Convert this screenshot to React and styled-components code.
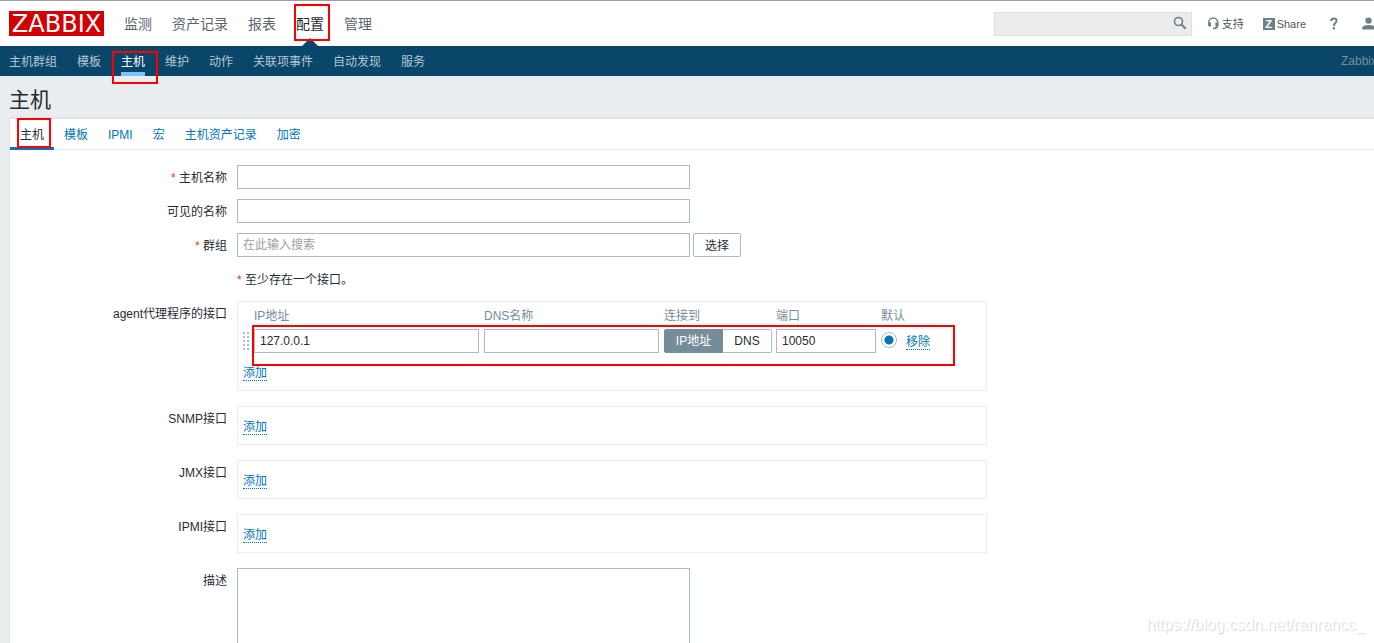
import React from "react";
import styled, { createGlobalStyle, css } from "styled-components";

const GlobalStyle = createGlobalStyle`
  *, *::before, *::after { box-sizing: border-box; }
  body {
    margin: 0;
    background: #e9edf0;
    color: #1f2c33;
    font: 12px/16px "Liberation Sans", "Noto Sans CJK SC", sans-serif;
  }
  input, textarea, button { font: inherit; color: inherit; }
`;

const Viewport = styled.div`
  height: 100vh;
  overflow: hidden;
`;

/* The page is slightly wider than the window, so its right edge is cut. */
const Page = styled.div`
  width: calc(100% + 10px);
`;

const Mark = styled.span`
  position: absolute;
  z-index: 5;
  top: ${(p) => p.$top}px;
  left: ${(p) => p.$left}px;
  width: ${(p) => p.$width}px;
  height: ${(p) => p.$height}px;
  border: 2px solid #f00;
  pointer-events: none;
`;

const Header = styled.header`
  display: flex;
  align-items: center;
  height: 46px;
  padding: 0 8px 0 9px;
  border-top: 1px solid #a0a0a0;
  background: #fff;
`;

const Logo = styled.a`
  width: 95px;
  height: 25px;
  margin-right: 20px;
  background: #d40000;
  color: #fff;
  font: 24px/27px "DejaVu Sans", sans-serif;
  text-align: center;
  text-decoration: none;
`;

const MainNav = styled.nav`
  display: flex;
  gap: 20px;
  height: 100%;
`;

const MainLink = styled.a`
  position: relative;
  color: ${(p) => (p.$active ? "#1f2c33" : "#5a656c")};
  font-size: 14px;
  line-height: 46px;
  text-decoration: none;
  ${(p) =>
    p.$active &&
    css`
      &::after {
        content: "";
        position: absolute;
        bottom: 0;
        left: 50%;
        margin-left: -8px;
        border: 8px solid transparent;
        border-top: 0;
        border-bottom-color: #0a466a;
      }
    `}
`;

const HeaderTools = styled.div`
  display: flex;
  align-items: center;
  margin-left: auto;
`;

const Search = styled.form`
  display: flex;
  align-items: center;
  width: 198px;
  height: 24px;
  margin-right: 15px;
  padding-right: 4px;
  border: 1px solid #e0e0e0;
  background: #ececec;
`;

const SearchInput = styled.input`
  flex: 1;
  min-width: 0;
  height: 22px;
  border: 0;
  background: transparent;
`;

const IconButton = styled.button`
  display: flex;
  padding: 0 0 2px;
  border: 0;
  background: none;
  color: #6c7f8a;
`;

const ToolLink = styled.a`
  display: flex;
  align-items: center;
  gap: 2px;
  margin-right: ${(p) => p.$gap || 0}px;
  color: #4f5a61;
  font-size: 11px;
  text-decoration: none;
  svg { color: #6c7f8a; }
`;

const ShareBadge = styled.span`
  width: 12px;
  height: 12px;
  background: #6c7f8a;
  color: #fff;
  font-size: 11px;
  font-weight: 700;
  line-height: 12px;
  text-align: center;
`;

const SubNav = styled.nav`
  display: flex;
  gap: 20px;
  height: 30px;
  padding: 0 7px 0 9px;
  background: #0a466a;
`;

const SubLink = styled.a`
  position: relative;
  height: 30px;
  border-bottom: 4px solid ${(p) => (p.$active ? "#7dc4f3" : "transparent")};
  color: ${(p) => (p.$active ? "#fff" : "#b4c8d4")};
  line-height: 32px;
  text-decoration: none;
`;

const ServerName = styled.span`
  margin-left: auto;
  color: #768d99;
  line-height: 30px;
`;

const Title = styled.h1`
  margin: 0;
  padding: 8px 9px 1px;
  font-size: 21px;
  font-weight: 400;
  line-height: 32px;
`;

const Panel = styled.main`
  margin-left: 9px;
  border: 1px solid #dfe4e7;
  border-top-width: 2px;
  background: #fff;
`;

const Tabs = styled.div`
  display: flex;
  height: 31px;
  border-bottom: 1px solid #ebeef0;
`;

const Tab = styled.a`
  position: relative;
  height: 31px;
  padding: 0 10px;
  border-bottom: 3px solid ${(p) => (p.$active ? "#0275b8" : "transparent")};
  color: ${(p) => (p.$active ? "#1f2c33" : "#0275b8")};
  line-height: 32px;
  text-decoration: none;
`;

const Form = styled.form`
  padding: 15px 0;
`;

const Row = styled.div`
  display: flex;
  align-items: flex-start;
  gap: 10px;
  margin-bottom: ${(p) => (p.$wide ? 15 : 10)}px;
`;

const Label = styled.label`
  flex: 0 0 217px;
  height: 24px;
  line-height: 26px;
  text-align: right;
  ${(p) => p.$required && css`
    &::before { content: "* "; color: #e33734; }
  `}
`;

const Note = styled.span`
  height: 24px;
  line-height: 26px;
  &::before { content: "* "; color: #e33734; }
`;

const TextInput = styled.input`
  display: block;
  width: ${(p) => p.$width}px;
  height: 24px;
  padding: 0 5px;
  border: 1px solid #acbbc2;
  border-radius: 0;
  background: #fff;
  &::placeholder { color: #a0a0a0; }
`;

const Picker = styled.div`
  display: flex;
  gap: 3px;
`;

const Button = styled.button`
  width: 48px;
  height: 24px;
  padding: 1px 0 0;
  border: 1px solid #acbbc2;
  border-radius: 2px;
  background: #fff;
`;

const TextArea = styled.textarea`
  width: 453px;
  padding: 4px 5px;
  border: 1px solid #acbbc2;
  resize: none;
`;

const InterfaceBox = styled.div`
  position: relative;
  width: 750px;
  padding: ${(p) => (p.$filled ? "5px 5px 9px" : "11px 5px 9px")};
  border: 1px solid #ebeef0;
`;

const Table = styled.table`
  table-layout: fixed;
  width: 738px;
  margin-bottom: 11px;
  border-collapse: collapse;
  th, td { padding: 0; text-align: left; }
  th {
    height: 22px;
    color: #768d99;
    font-weight: 400;
    line-height: 18px;
    vertical-align: top;
  }
`;

const Col = styled.col`
  width: ${(p) => p.$width}px;
`;

const LinkButton = styled.button`
  display: block;
  height: 17px;
  padding: 0;
  border: 0;
  border-bottom: 1px dotted #0275b8;
  background: none;
  color: #0275b8;
  line-height: 18px;
`;

const Segmented = styled.div`
  display: flex;
  width: 108px;
`;

const Segment = styled.button`
  flex: ${(p) => (p.$active ? "0 0 59px" : "1")};
  height: 24px;
  padding: 0;
  border: 1px solid ${(p) => (p.$active ? "#768d99" : "#acbbc2")};
  border-left-width: ${(p) => (p.$active ? 1 : 0)}px;
  border-radius: ${(p) => (p.$active ? "2px 0 0 2px" : "0 2px 2px 0")};
  background: ${(p) => (p.$active ? "#768d99" : "#fff")};
  color: ${(p) => (p.$active ? "#fff" : "#1f2c33")};
`;

const Radio = styled.input`
  appearance: none;
  display: block;
  width: 16px;
  height: 16px;
  margin: 0 0 2px;
  border: 1px solid #acbbc2;
  border-radius: 50%;
  background: #fff;
  &:checked { background: radial-gradient(circle, #0275b8 4px, #fff 5px); }
`;

const Handle = styled.svg`
  display: block;
  color: #acbbc2;
`;

const Watermark = styled.span`
  position: fixed;
  right: 9px;
  bottom: 8px;
  color: #fff;
  font-size: 16px;
  line-height: 20px;
  text-shadow: 1px 1px 1px #d4d4d4;
`;

const SearchIcon = () => (
  <svg width="14" height="14" viewBox="0 0 14 14" fill="none" stroke="currentColor" aria-hidden="true">
    <circle cx="5.5" cy="5.5" r="4" strokeWidth="1.6" />
    <path d="M8.5 8.5L12.7 12.7" strokeWidth="2" />
  </svg>
);

const HeadsetIcon = () => (
  <svg width="13" height="14" viewBox="0 0 13 14" aria-hidden="true">
    <path d="M1.7 7V5.500a4.500 4.500 0 0 1 9 0V8.500Q10.700 11 7.700 11.300" fill="none" stroke="currentColor" strokeWidth="1.4" />
    <path d="M1 5.500h3v4H2.500Q1 9.500 1 8zM8.400 5.500h3V8q0 1.500-1.500 1.500H8.400zM6 10.500h2.500v1.700H6z" fill="currentColor" />
  </svg>
);

const HelpIcon = () => (
  <svg width="8" height="14" viewBox="0 0 8 14" aria-hidden="true">
    <path d="M1.200 4Q1.200 1.500 3.900 1.500T6.600 3.800Q6.600 5 5.200 6.100T3.900 9" fill="none" stroke="currentColor" strokeWidth="2" />
    <path d="M2.800 10.200h2.200v2.200H2.800z" fill="currentColor" />
  </svg>
);

const UserIcon = () => (
  <svg width="14" height="14" viewBox="0 0 14 14" fill="currentColor" aria-hidden="true">
    <circle cx="6.500" cy="3.600" r="3.200" />
    <path d="M.3 12.500v-2Q.8 8 6.500 8T12.700 10.500v2z" />
  </svg>
);

const DragHandle = () => (
  <Handle width="6" height="18" viewBox="0 0 6 18" fill="currentColor" aria-hidden="true">
    {[0, 4, 8, 12, 16].map((y) => (
      <path key={y} d={`M0 ${y}h2v2H0zM4 ${y}h2v2H4z`} />
    ))}
  </Handle>
);

const mainItems = ["监测", "资产记录", "报表", "配置", "管理"];
const subItems = ["主机群组", "模板", "主机", "维护", "动作", "关联项事件", "自动发现", "服务"];
const tabItems = ["主机", "模板", "IPMI", "宏", "主机资产记录", "加密"];
const emptyInterfaces = ["SNMP接口", "JMX接口", "IPMI接口"];
const columnWidths = [11, 230, 180, 112, 105, 25, 75];

export default function App() {
  return (
    <Viewport>
      <GlobalStyle />
      <Page>
        <Header>
          <Logo href="#">ZABBIX</Logo>
          <MainNav>
            {mainItems.map((item) => (
              <MainLink key={item} href="#" $active={item === "配置"}>
                {item}
                {item === "配置" && <Mark $top={3} $left={-2} $width={36} $height={37} />}
              </MainLink>
            ))}
          </MainNav>
          <HeaderTools>
            <Search>
              <SearchInput type="text" aria-label="搜索" />
              <IconButton type="button" aria-label="搜索"><SearchIcon /></IconButton>
            </Search>
            <ToolLink href="#" $gap={19}><HeadsetIcon />支持</ToolLink>
            <ToolLink href="#" $gap={24}><ShareBadge>Z</ShareBadge>Share</ToolLink>
            <ToolLink href="#" $gap={24} aria-label="帮助"><HelpIcon /></ToolLink>
            <ToolLink href="#" aria-label="用户"><UserIcon /></ToolLink>
          </HeaderTools>
        </Header>
        <SubNav>
          {subItems.map((item) => (
            <SubLink key={item} href="#" $active={item === "主机"}>
              {item}
              {item === "主机" && <Mark $top={5} $left={-9} $width={46} $height={33} />}
            </SubLink>
          ))}
          <ServerName>Zabbix</ServerName>
        </SubNav>
        <Title>主机</Title>
        <Panel>
          <Tabs>
            {tabItems.map((item) => (
              <Tab key={item} href="#" $active={item === "主机"}>
                {item}
                {item === "主机" && <Mark $top={-1} $left={7} $width={34} $height={30} />}
              </Tab>
            ))}
          </Tabs>
          <Form>
            <Row>
              <Label htmlFor="host" $required>主机名称</Label>
              <TextInput id="host" type="text" $width={453} />
            </Row>
            <Row>
              <Label htmlFor="visible">可见的名称</Label>
              <TextInput id="visible" type="text" $width={453} />
            </Row>
            <Row>
              <Label htmlFor="groups" $required>群组</Label>
              <Picker>
                <TextInput id="groups" type="text" placeholder="在此输入搜索" $width={453} />
                <Button type="button">选择</Button>
              </Picker>
            </Row>
            <Row>
              <Label as="span" />
              <Note>至少存在一个接口。</Note>
            </Row>
            <Row $wide>
              <Label htmlFor="agent-ip">agent代理程序的接口</Label>
              <InterfaceBox $filled>
                <Table>
                  <colgroup>
                    {columnWidths.map((width, i) => <Col key={i} $width={width} />)}
                  </colgroup>
                  <thead>
                    <tr>
                      <th />
                      <th>IP地址</th>
                      <th>DNS名称</th>
                      <th>连接到</th>
                      <th>端口</th>
                      <th colSpan={2}>默认</th>
                    </tr>
                  </thead>
                  <tbody>
                    <tr>
                      <td><DragHandle /></td>
                      <td><TextInput id="agent-ip" type="text" defaultValue="127.0.0.1" $width={225} /></td>
                      <td><TextInput type="text" aria-label="DNS名称" $width={175} /></td>
                      <td>
                        <Segmented>
                          <Segment type="button" $active>IP地址</Segment>
                          <Segment type="button">DNS</Segment>
                        </Segmented>
                      </td>
                      <td><TextInput type="text" aria-label="端口" defaultValue="10050" $width={100} /></td>
                      <td><Radio type="radio" name="default" aria-label="默认" defaultChecked /></td>
                      <td><LinkButton type="button">移除</LinkButton></td>
                    </tr>
                  </tbody>
                </Table>
                <LinkButton type="button">添加</LinkButton>
                <Mark $top={23} $left={14} $width={703} $height={41} />
              </InterfaceBox>
            </Row>
            {emptyInterfaces.map((name) => (
              <Row key={name} $wide>
                <Label as="span">{name}</Label>
                <InterfaceBox>
                  <LinkButton type="button">添加</LinkButton>
                </InterfaceBox>
              </Row>
            ))}
            <Row>
              <Label htmlFor="description">描述</Label>
              <TextArea id="description" rows={7} />
            </Row>
          </Form>
        </Panel>
      </Page>
      <Watermark>https://blog.csdn.net/ranrancc_</Watermark>
    </Viewport>
  );
}
